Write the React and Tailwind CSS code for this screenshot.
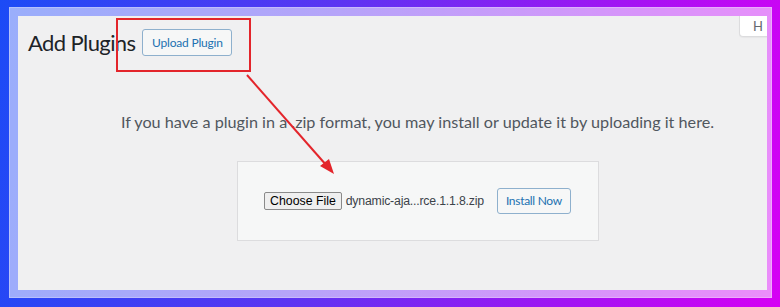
import React from "react";

export default function App() {
  return (
    <div
      className="relative w-[780px] h-[307px] overflow-hidden pt-[7px] pl-[9px] pr-[8px] pb-[9px] bg-[linear-gradient(100deg,#1c4bf6_0%,#5a35f2_40%,#a313f3_75%,#d600f4_100%)]"
      style={{ fontFamily: 'Lato, "Noto Sans", sans-serif' }}
    >
      <div className="h-full pt-[9px] pl-[9px] pr-[5px] pb-[8px] bg-white/55 shadow-[inset_0_0_0_1px_rgba(255,255,255,0.25)]">
        <div className="relative h-full overflow-hidden bg-[#f0f0f1]">
          {/* Help tab (clipped) */}
          <div className="absolute top-0 right-[-22px] w-[50px] h-[21px] bg-white border border-[#dcdcde] border-t-0 rounded-bl-[4px] shadow-[0_1px_1px_rgba(0,0,0,0.04)] pl-[13px] text-[13px] leading-[20px] text-[#646970]">
            H
          </div>

          {/* Title row */}
          <div className="flex items-center pt-[13px] pl-[10px]">
            <h1 className="text-[22px] leading-[27px] font-normal tracking-[-0.6px] text-[#1d2327]">
              Add Plugins
            </h1>
            <button className="ml-[7px] h-[27px] w-[90px] rounded-[3px] border border-[#8eb0cd] bg-[#f6f7f7] text-[12px] leading-[25px] tracking-[-0.2px] text-[#2271b1]">
              Upload Plugin
            </button>
          </div>

          {/* Upload section */}
          <div className="flex flex-col items-center pl-[50px] pt-[55px]">
            <p className="text-[16.2px] leading-[22px] text-[#50575e]">
              If you have a plugin in a .zip format, you may install or update it by uploading it here.
            </p>
            <div className="mt-[28px] w-[362px] h-[80px] flex items-center justify-center bg-[#f6f7f7] border border-[#dcdcde]">
              <div className="flex items-center">
                <button
                  className="h-[18px] px-[5px] rounded-[2px] border border-[#8a8a8a] bg-[#efefef] text-[12.3px] leading-[16px] text-black"
                  style={{ fontFamily: '"Liberation Sans", Arial, sans-serif' }}
                >
                  Choose File
                </button>
                <span
                  className="ml-[4px] text-[12.3px] tracking-[-0.2px] text-[#3c434a]"
                  style={{ fontFamily: '"Liberation Sans", Arial, sans-serif' }}
                >
                  dynamic-aja...rce.1.1.8.zip
                </span>
                <button className="ml-[13px] h-[26px] w-[74px] rounded-[3px] border border-[#8eb0cd] bg-[#f6f7f7] text-[12px] leading-[24px] tracking-[-0.3px] text-[#2271b1]">
                  Install Now
                </button>
              </div>
            </div>
          </div>
        </div>
      </div>

      {/* Red highlight box */}
      <div className="absolute left-[116px] top-[18px] w-[135px] h-[54px] border-2 border-[#e3252b]" />

      {/* Red arrow */}
      <svg className="absolute left-0 top-0" width="780" height="307" viewBox="0 0 780 307">
        <line x1="247" y1="75" x2="327" y2="166" stroke="#e3252b" strokeWidth="2" />
        <polygon points="334,174 320,166 329,159" fill="#e3252b" />
      </svg>
    </div>
  );
}
